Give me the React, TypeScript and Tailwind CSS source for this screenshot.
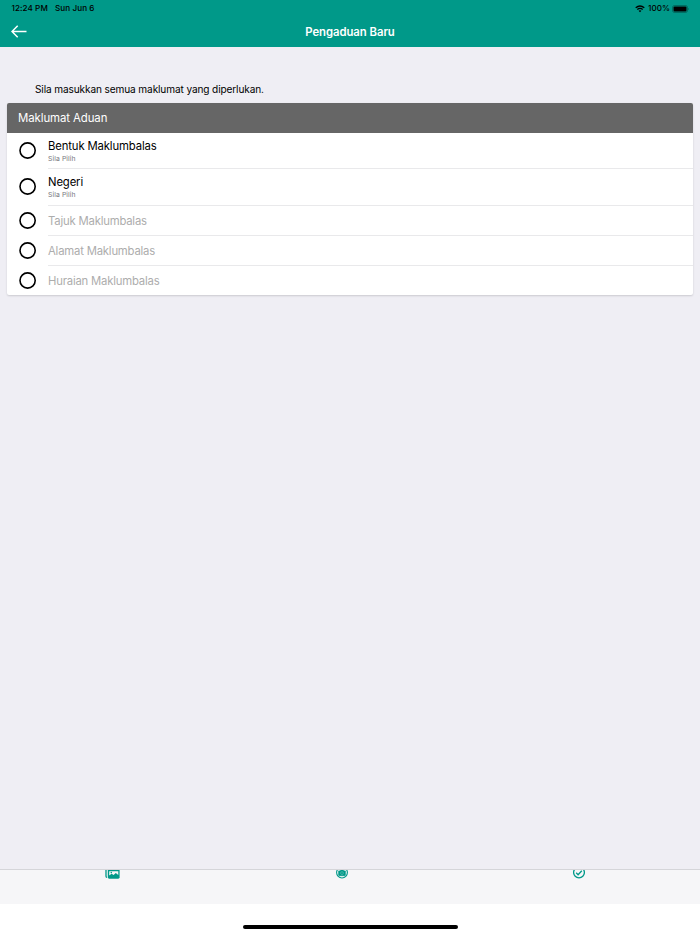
import React from 'react';

function Row({ title, detail, last = false }: { title: string; detail?: string; last?: boolean }) {
  return (
    <div className={'flex pl-[12px] ' + (detail ? 'h-[36.25px]' : 'h-[30px]')}>
      <div className={'flex w-[29px] items-center ' + (detail ? 'pb-[1px]' : 'pb-[0.5px]')}>
        <svg width="17" height="17" viewBox="0 0 17 17" fill="none" stroke="black" strokeWidth="1.6">
          <circle cx="8.6" cy="8.5" r="7.6" />
        </svg>
      </div>
      <div className={'flex flex-1 flex-col justify-center ' + (last ? '' : 'border-b border-[#e9e9eb]')}>
        {detail ? (
          <>
            <span className="text-[11.3px] leading-[15px] tracking-[-0.13px] text-black">{title}</span>
            <span className="text-[6.8px] leading-[9px] tracking-[0.1px] text-[#77777c]">{detail}</span>
          </>
        ) : (
          <span className={'text-[11.3px] leading-[15px] tracking-[-0.19px] text-[#adadad] ' + (last ? 'pt-[1px]' : 'pt-[2px]')}>{title}</span>
        )}
      </div>
    </div>
  );
}

function StatusBar() {
  return (
    <div className="flex h-[17px] items-center pl-[11.5px] pr-[11px] text-[8.1px] font-medium leading-[17px] tracking-[0.08px] text-black">
      <span className="w-[43.5px] whitespace-nowrap">12:24 PM</span>
      <span className="flex-1">Sun Jun 6</span>
      <svg className="mr-[3px]" width="10" height="8" viewBox="0 0 10 8" fill="none" stroke="black" strokeWidth="1.3">
        <path d="M.7 2.8Q5-.9 9.3 2.8M2.3 4.6Q5 2.3 7.7 4.6" />
        <path d="M5 7.2 3.6 5.8Q5 4.7 6.4 5.8Z" fill="black" stroke="none" />
      </svg>
      <span className="w-[24px] whitespace-nowrap">100%</span>
      <svg width="17" height="8" viewBox="0 0 17 8">
        <rect x=".5" y=".5" width="15" height="7" rx="2" fill="none" stroke="black" strokeOpacity=".4" strokeWidth=".7" />
        <rect x="1.5" y="1.5" width="13" height="5" rx="1" />
        <path d="M16.2 2.9Q17.3 4 16.2 5.1Z" fillOpacity=".5" />
      </svg>
    </div>
  );
}

export default function App() {
  return (
    <div className="flex h-[934px] w-[700px] flex-col overflow-hidden bg-[#efeef4] font-['Inter','Liberation_Sans',sans-serif]">
      <header className="h-[47px] bg-[#009989]">
        <StatusBar />
        <div className="grid h-[29px] grid-cols-[1fr_auto_1fr] items-center pl-[11px] pr-[11px] text-white">
          <svg width="16" height="14" viewBox="0 0 16 14" fill="none" stroke="white" strokeWidth="1.5">
            <path d="M6.7.8 1 6.5l5.7 5.7M1 6.5h14.5" />
          </svg>
          <h1 className="pt-[2px] text-[11.3px] font-semibold leading-[15px] tracking-[-0.03px]">Pengaduan Baru</h1>
          <span />
        </div>
      </header>
      <main className="flex-1 px-[7px] pt-[34px]">
        <p className="h-[22px] pl-[28px] text-[10.1px] leading-[16px] tracking-[-0.12px] text-black">Sila masukkan semua maklumat yang diperlukan.</p>
        <section className="h-[192.25px] overflow-hidden rounded-[2px] bg-white shadow-[0_1px_2px_rgba(0,0,0,0.15)]">
          <h2 className="h-[30px] bg-[#666666] pl-[11px] text-[11.4px] leading-[30px] tracking-[-0.08px] text-white">Maklumat Aduan</h2>
          <Row title="Bentuk Maklumbalas" detail="Sila Pilih" />
          <Row title="Negeri" detail="Sila Pilih" />
          <Row title="Tajuk Maklumbalas" />
          <Row title="Alamat Maklumbalas" />
          <Row title="Huraian Maklumbalas" last />
        </section>
      </main>
      <nav className="flex h-[35px] border-t border-[#d5d5d9] bg-[#f6f6f8]">
        <div className="h-[10px] w-[225px] overflow-hidden pl-[105px]">
          <svg width="15" height="10" viewBox="0 0 15 10">
            <path d="M1 0v6.3Q1 7.3 2 7.3" fill="none" stroke="#009989" strokeWidth="1.3" />
            <rect x="2.8" y="-2" width="11.8" height="10.7" rx="1.4" fill="#009989" />
            <path d="M4.2 1.3h9.1v3.6l-2.5-1.9-2.2 2-2-1.3-2.4 1.7Z" fill="#f6f6f8" />
            <circle cx="6.3" cy="2.6" r=".8" fill="#009989" />
          </svg>
        </div>
        <div className="h-[10px] w-[233px] overflow-hidden pl-[111px]">
          <svg width="12" height="10" viewBox="0 0 12 10">
            <circle cx="6" cy="2.6" r="5.4" fill="none" stroke="#009989" strokeWidth="1.1" />
            <path d="M2.6.9h1.5L4.8 0h2.4l.7.9h1.5v4Q9.4 5.7 8.6 5.7H3.4Q2.6 5.7 2.6 4.9Z" fill="#009989" stroke="#009989" strokeWidth=".6" />
            <circle cx="6" cy="3.1" r="1.4" fill="none" stroke="#65c2b8" strokeWidth=".6" />
          </svg>
        </div>
        <div className="h-[10px] flex-1 overflow-hidden pl-[115px]">
          <svg width="12" height="10" viewBox="0 0 12 10" fill="none" stroke="#009989" strokeWidth="1.3">
            <circle cx="6" cy="2.5" r="5.4" />
            <path d="m3.2 2.8 1.9 1.9 3.7-4" />
          </svg>
        </div>
      </nav>
      <footer className="flex h-[30px] justify-center bg-white pt-[20.5px]">
        <span className="h-[4px] w-[215px] rounded-full bg-black" />
      </footer>
    </div>
  );
}
